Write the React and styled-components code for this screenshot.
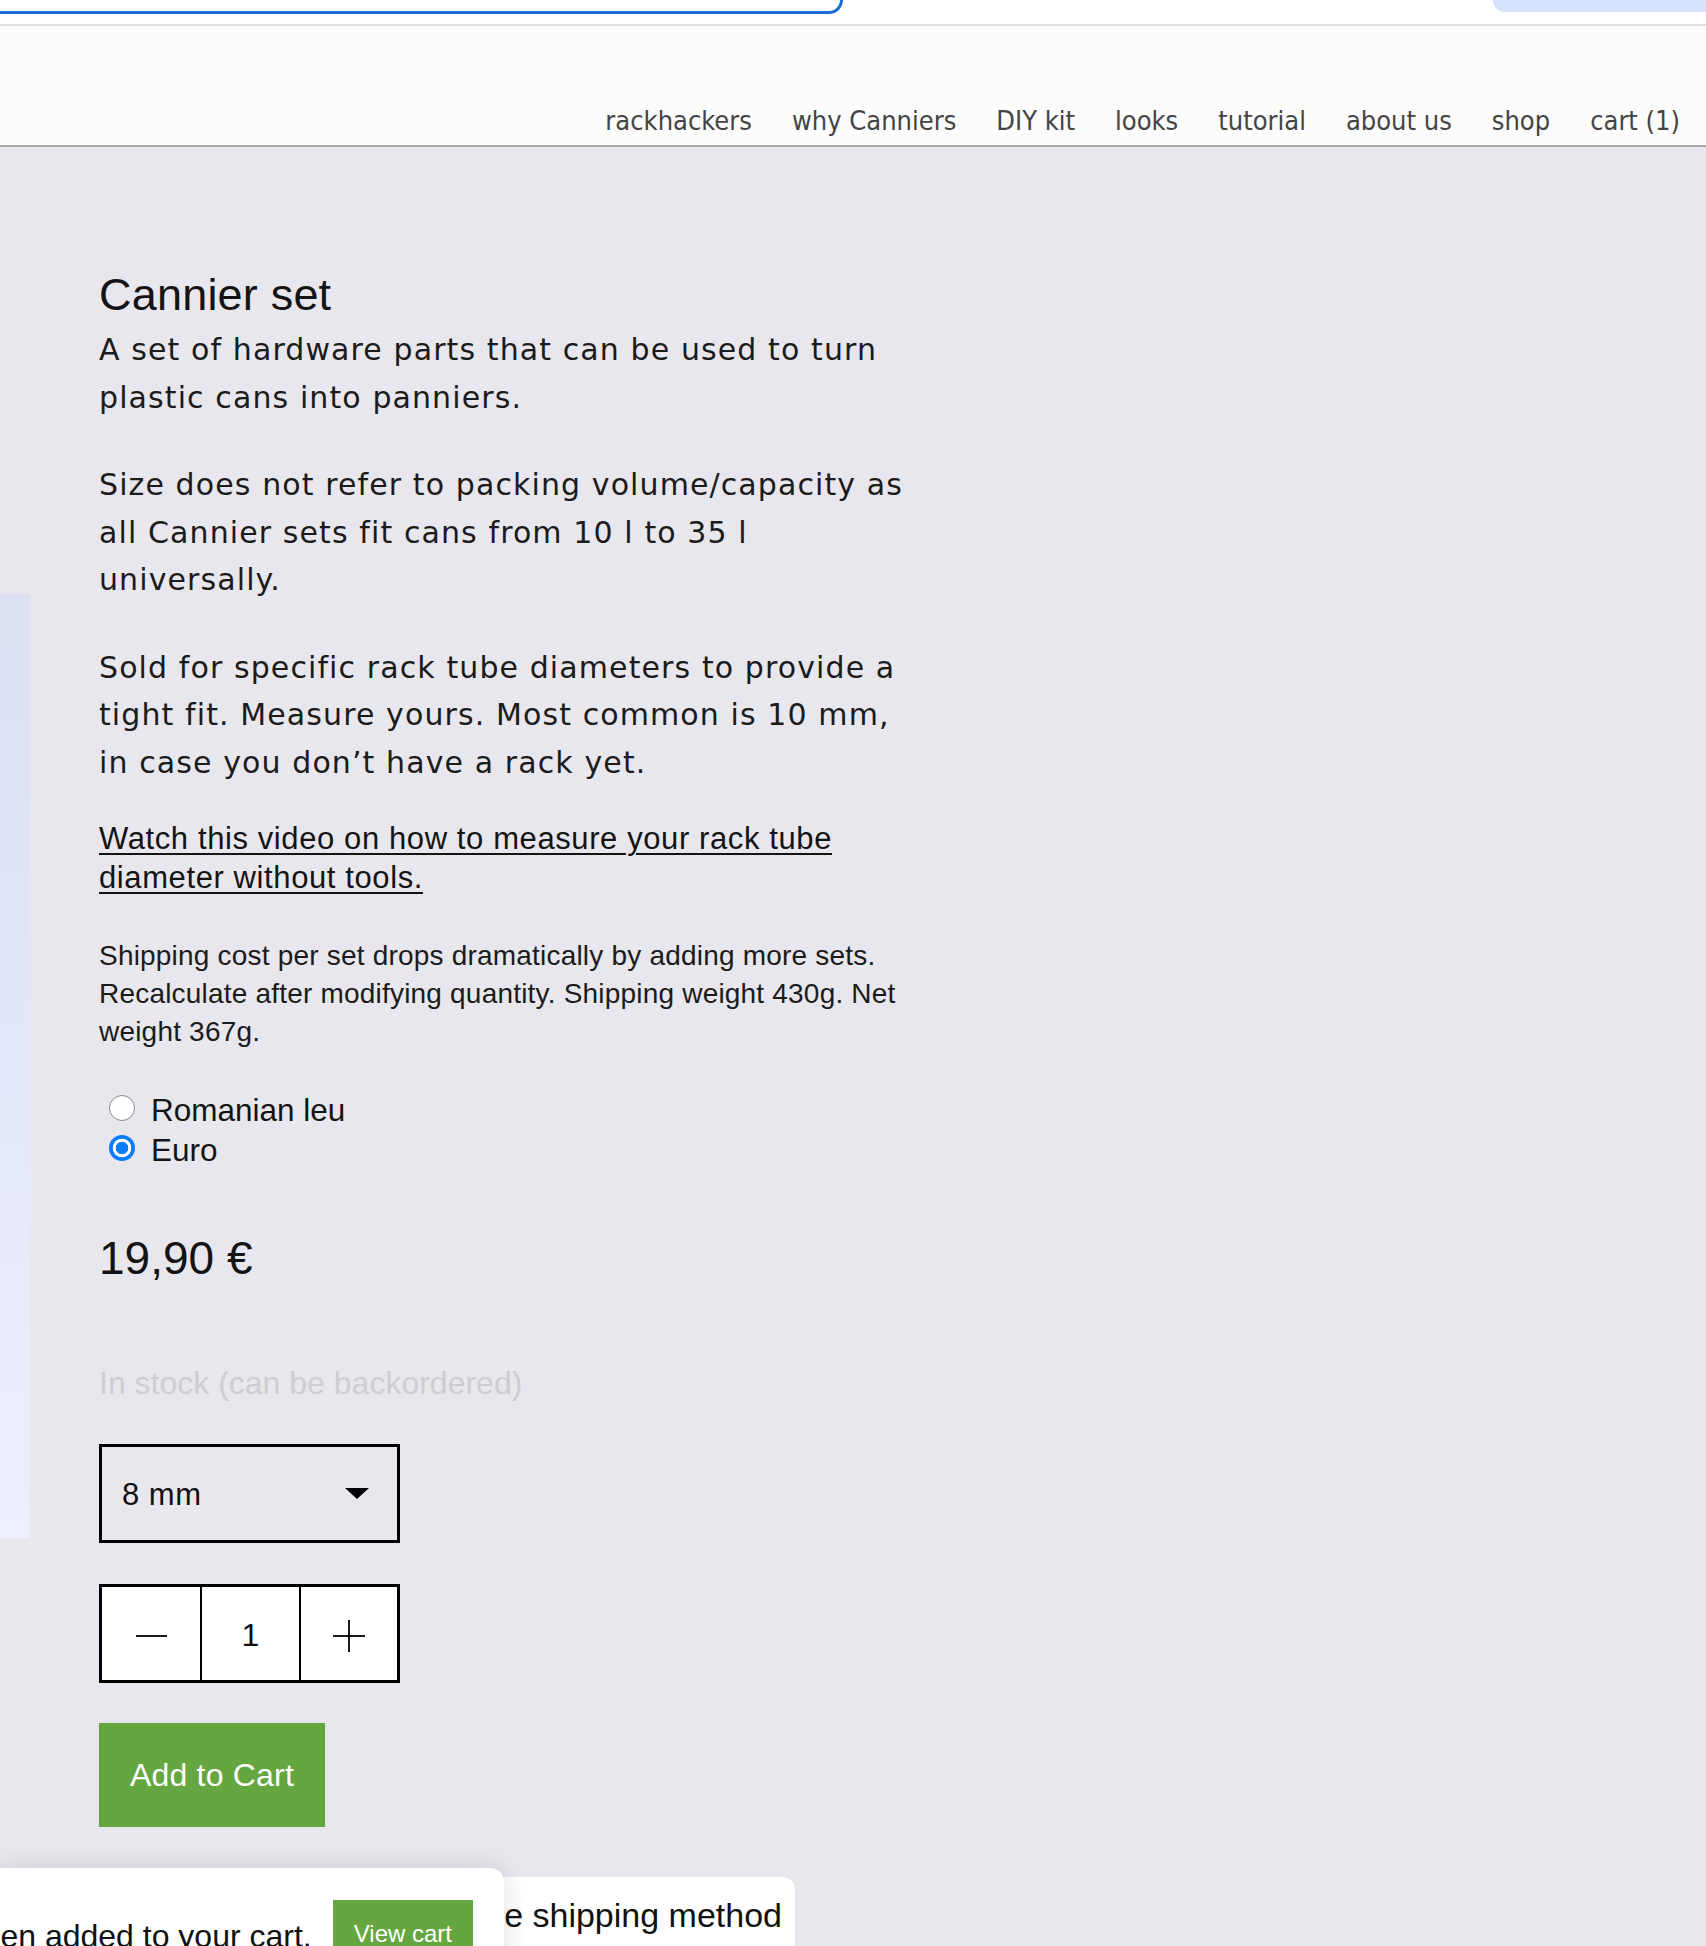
import React from 'react'
import styled, { createGlobalStyle } from 'styled-components'

const navItems = ['rackhackers', 'why Canniers', 'DIY kit', 'looks', 'tutorial', 'about us', 'shop', 'cart (1)']

const App = () => {
  return (
    <Page>
      <GlobalStyle />
      <BrowserBar>
        <AddressBox />
        <ProfilePill />
      </BrowserBar>
      <Divider />
      <Header>
        <Nav>
          {navItems.map(item => <NavLink key={item}>{item}</NavLink>)}
        </Nav>
      </Header>

      <SideTab />

      <Main>
        <Title>Cannier set</Title>
        <Text $first>A set of hardware parts that can be used to turn plastic cans into panniers.</Text>
        <Text>Size does not refer to packing volume/capacity as all Cannier sets fit cans from 10 l to 35 l universally.</Text>
        <Text>Sold for specific rack tube diameters to provide a tight fit. Measure yours. Most common is 10 mm, in case you don’t have a rack yet.</Text>
        <VideoLink>Watch this video on how to measure your rack tube diameter without tools.</VideoLink>
        <Shipping>Shipping cost per set drops dramatically by adding more sets. Recalculate after modifying quantity. Shipping weight 430g. Net weight 367g.</Shipping>

        <Currencies>
          <RadioRow>
            <Radio type="radio" name="currency" />
            Romanian leu
          </RadioRow>
          <RadioRow>
            <Radio type="radio" name="currency" defaultChecked />
            Euro
          </RadioRow>
        </Currencies>

        <Price>19,90 €</Price>
        <Stock>In stock (can be backordered)</Stock>

        <SizeSelect>
          <span>8 mm</span>
          <Caret />
        </SizeSelect>

        <Quantity>
          <QtyCell>
            <svg width="31" height="4" viewBox="0 0 31 4"><line x1="0" y1="2" x2="31" y2="2" stroke="#000" strokeWidth="1.8" /></svg>
          </QtyCell>
          <QtyCell $divided>1</QtyCell>
          <QtyCell $divided>
            <svg width="32" height="32" viewBox="0 0 32 32"><line x1="0" y1="16" x2="32" y2="16" stroke="#000" strokeWidth="1.8" /><line x1="16" y1="0" x2="16" y2="32" stroke="#000" strokeWidth="1.8" /></svg>
          </QtyCell>
        </Quantity>

        <AddToCart>Add to Cart</AddToCart>
      </Main>

      <ShippingCard>Choose the shipping method</ShippingCard>
      <CartToast>
        <ToastText>“Cannier set” has been added to your cart.</ToastText>
        <ViewCart>View cart</ViewCart>
      </CartToast>
    </Page>
  )
}

export default App

const GlobalStyle = createGlobalStyle`
  body {
    margin: 0;
    background: #e8e7ed;
    font-family: "Liberation Sans", Arial, sans-serif;
  }
`

const Page = styled.div`
  position: relative;
  min-height: 1946px;
  overflow: hidden;
  background: #e8e7ed;
`

const BrowserBar = styled.div`
  height: 24px;
  background: #fff;
  display: flex;
  justify-content: space-between;
  align-items: flex-start;
`

const AddressBox = styled.div`
  width: 840px;
  height: 11px;
  border: 3.5px solid #1b6bd8;
  border-top: 0;
  border-left: 0;
  border-bottom-right-radius: 22px;
  background: #fff;
`

const ProfilePill = styled.div`
  width: 213px;
  height: 12px;
  background: #d3e3fd;
  border-bottom-left-radius: 22px;
`

const Divider = styled.div`
  height: 2px;
  background: #e0e0e0;
`

const Header = styled.header`
  height: 110px;
  background: #fcfcfc;
  border-bottom: 2px solid #a9a9a9;
  display: flex;
  justify-content: flex-end;
  align-items: flex-end;
  padding: 0 26px 9px 0;
`

const Nav = styled.nav`
  display: flex;
  gap: 40px;
`

const NavLink = styled.a`
  font-family: "DejaVu Sans Condensed", "DejaVu Sans", sans-serif;
  font-stretch: condensed;
  font-size: 27px;
  line-height: 30px;
  color: #444;
  text-decoration: none;
  cursor: pointer;
`

const SideTab = styled.div`
  position: absolute;
  left: 0;
  top: 594px;
  width: 30px;
  height: 944px;
  background: linear-gradient(180deg, #dbe1f3 0%, #e1e6fa 45%, #eceffd 100%);
`

const Main = styled.main`
  display: flex;
  flex-direction: column;
  align-items: flex-start;
  max-width: 815px;
  padding: 123px 0 0 99px;
  color: #1b1b1b;
`

const Title = styled.h1`
  margin: 0;
  font-family: "Liberation Sans", Arial, sans-serif;
  font-weight: 400;
  font-size: 45px;
  letter-spacing: 0.2px;
  line-height: 50px;
  color: #141414;
`

const Text = styled.p`
  margin: ${p => (p.$first ? '6px' : '40px')} 0 0;
  font-family: "DejaVu Sans", Verdana, sans-serif;
  font-size: 30px;
  letter-spacing: 1.1px;
  line-height: 47.5px;
`

const VideoLink = styled.a`
  display: block;
  margin-top: 33px;
  font-size: 31px;
  letter-spacing: 0.6px;
  line-height: 39px;
  color: #141414;
  text-decoration: underline;
  text-decoration-thickness: 2px;
  text-underline-offset: 4px;
  cursor: pointer;
`

const Shipping = styled.p`
  margin: 40px 0 0;
  font-size: 28px;
  letter-spacing: 0.2px;
  line-height: 38px;
`

const Currencies = styled.div`
  margin-top: 39px;
  display: flex;
  flex-direction: column;
`

const RadioRow = styled.label`
  display: flex;
  align-items: center;
  gap: 16px;
  height: 40px;
  font-size: 31.5px;
  color: #141414;
`

const Radio = styled.input`
  appearance: none;
  margin: 0 0 4px 10px;
  width: 26px;
  height: 26px;
  border-radius: 50%;
  border: 1.5px solid #8a8a8a;
  background: #fff;
  box-sizing: border-box;

  &:checked {
    border: 0;
    background: radial-gradient(circle, #0b7bff 0 6px, #fff 6.6px 9px, #0b7bff 9.6px);
  }
`

const Price = styled.div`
  margin-top: 62px;
  font-size: 46px;
  line-height: 53px;
  color: #141414;
`

const Stock = styled.div`
  margin-top: 80px;
  font-size: 32px;
  line-height: 36px;
  color: #cfcdd1;
`

const SizeSelect = styled.div`
  margin-top: 43px;
  width: 301px;
  height: 99px;
  box-sizing: border-box;
  border: 3px solid #000;
  display: flex;
  align-items: center;
  justify-content: space-between;
  padding: 2px 28px 0 20px;
  font-size: 31px;
  letter-spacing: 0.5px;
  color: #111;
`

const Caret = styled.span`
  width: 0;
  height: 0;
  border-left: 12px solid transparent;
  border-right: 12px solid transparent;
  border-top: 11px solid #000;
  margin-bottom: 2px;
`

const Quantity = styled.div`
  margin-top: 41px;
  width: 301px;
  height: 99px;
  box-sizing: border-box;
  border: 3px solid #000;
  display: grid;
  grid-template-columns: 1fr 1fr 1fr;
  background: #fff;
`

const QtyCell = styled.div`
  display: flex;
  align-items: center;
  justify-content: center;
  border-left: ${p => (p.$divided ? '2px solid #000' : '0')};
  font-size: 32px;
  color: #111;
  padding-top: 4px;
`

const AddToCart = styled.button`
  margin-top: 40px;
  width: 226px;
  height: 104px;
  border: 0;
  background: #66a640;
  color: #fff;
  font-family: "Liberation Sans", Arial, sans-serif;
  font-size: 32px;
  letter-spacing: 0.2px;
  padding: 0;
  cursor: pointer;
`

const ShippingCard = styled.div`
  position: absolute;
  left: 150px;
  top: 1877px;
  width: 645px;
  height: 120px;
  box-sizing: border-box;
  padding: 19px 13px 0 0;
  background: #fff;
  border-radius: 12px;
  text-align: right;
  font-size: 34px;
  color: #111;
  white-space: nowrap;
`

const CartToast = styled.div`
  position: absolute;
  left: 0;
  top: 1868px;
  width: 504px;
  height: 120px;
  box-sizing: border-box;
  padding: 32px 31px 0 0;
  background: #fff;
  border-top-right-radius: 14px;
  box-shadow: 0 0 26px rgba(0, 0, 0, 0.13);
  display: flex;
  justify-content: flex-end;
  align-items: flex-start;
  gap: 21px;
  overflow: hidden;
`

const ToastText = styled.span`
  flex-shrink: 0;
  margin-top: 18px;
  font-size: 32px;
  color: #111;
  white-space: nowrap;
`

const ViewCart = styled.button`
  flex-shrink: 0;
  border: 0;
  padding: 20px 21px;
  background: #66a640;
  color: #fff;
  font-family: "Liberation Sans", Arial, sans-serif;
  font-size: 24px;
  line-height: 28px;
`
